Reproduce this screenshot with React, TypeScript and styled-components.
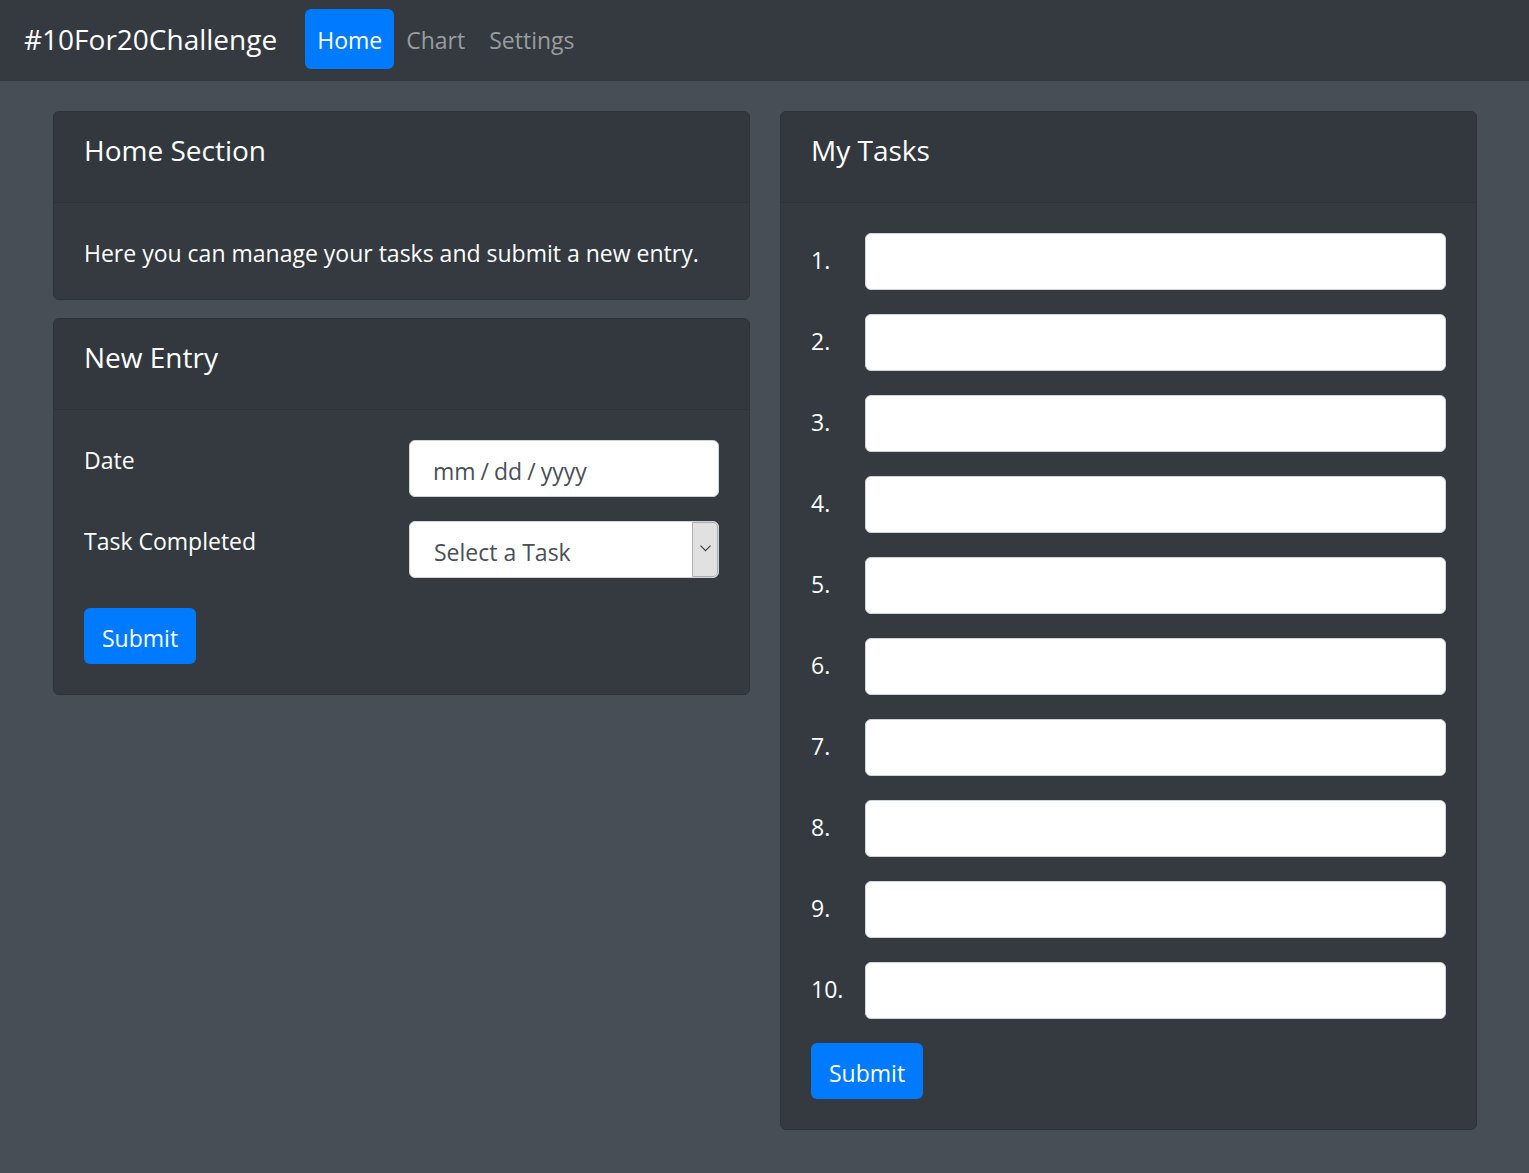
import React from 'react';
import styled, { createGlobalStyle } from 'styled-components';

const GlobalStyle = createGlobalStyle`
  *, *::before, *::after { box-sizing: border-box; }
  html { min-height: 100%; background: #484e55; }
  body {
    margin: 0;
    background: #484e55;
    color: #fff;
    font-family: "Open Sans", "Noto Sans", sans-serif;
    font-size: 23px;
    line-height: 36px;
  }
  button, input, select { font: inherit; }
`;

const Navbar = styled.nav`
  display: flex;
  align-items: center;
  gap: 28px;
  height: 81px;
  padding: 0 24px 3px;
  background: #343a40;
`;

const Brand = styled.a`
  color: #fff;
  font-size: 28px;
  line-height: 44px;
  text-decoration: none;
`;

const NavList = styled.ul`
  display: flex;
  margin: 0;
  padding: 0;
  list-style: none;
`;

const NavLink = styled.a<{ $active?: boolean }>`
  display: block;
  padding: 13px 12px 11px;
  border-radius: 6px;
  color: ${p => (p.$active ? '#fff' : '#999c9f')};
  background: ${p => (p.$active ? '#007bff' : 'transparent')};
  text-decoration: none;
`;

const Main = styled.main`
  display: grid;
  grid-template-columns: repeat(2, minmax(0, 1fr));
  align-items: start;
  gap: 30px;
  padding: 30px 52px 43px 53px;
`;

const Column = styled.div`
  display: flex;
  flex-direction: column;
  gap: 18px;
`;

const Card = styled.section`
  border: 1px solid #2e3338;
  border-radius: 6px;
  background: #343a40;
`;

const CardHeader = styled.header`
  height: 91px;
  padding: 20px 30px 0;
  border-bottom: 1px solid #2e3338;
  background: #32383e;
  border-radius: 5px 5px 0 0;
`;

const CardTitle = styled.h2`
  margin: 0;
  font-size: 28px;
  font-weight: 400;
  line-height: 36px;
`;

const CardBody = styled.div`
  padding: 30px;
`;

const Text = styled.p`
  margin: 0;
  padding-top: 4px;
  line-height: 32px;
`;

const Form = styled.form`
  display: flex;
  flex-direction: column;
  align-items: stretch;
  gap: 24px;
`;

const EntryRow = styled.div`
  display: grid;
  grid-template-columns: minmax(0, 1fr) minmax(0, 1fr);
  gap: 15px;
`;

const TaskRow = styled.div`
  display: grid;
  grid-template-columns: 39px minmax(0, 1fr);
  gap: 15px;
`;

const Label = styled.label`
  padding-top: 2px;

  ${TaskRow} & {
    padding-top: 9px;
  }
`;

const Field = styled.input`
  display: block;
  width: 100%;
  height: 57px;
  padding: 4px 22px 0;
  border: 1px solid #ced4da;
  border-radius: 6px;
  background: #fff;
  color: #495057;
`;

const DateField = styled(Field)`
  &::-webkit-calendar-picker-indicator { display: none; }
  &::-webkit-datetime-edit-text { padding: 0 4px; }
  &::-webkit-datetime-edit-month-field,
  &::-webkit-datetime-edit-day-field,
  &::-webkit-datetime-edit-year-field {
    padding: 0 1px;
    color: #495057;
  }
`;

const SelectBox = styled.div`
  display: grid;
  grid-template-columns: minmax(0, 1fr) 27px;
  height: 57px;
`;

const Select = styled.select`
  grid-area: 1 / 1 / 2 / 3;
  width: 100%;
  height: 57px;
  padding: 4px 40px 0 24px;
  border: 1px solid #ced4da;
  border-radius: 6px;
  appearance: none;
  background: #fff;
  color: #495057;
`;

const Arrow = styled.span`
  grid-area: 1 / 2 / 2 / 3;
  display: grid;
  place-items: center;
  margin: 1px 1px 1px 0;
  padding-bottom: 2px;
  border: 1px solid #adadad;
  border-radius: 0 5px 5px 0;
  background: #e1e1e1;
  pointer-events: none;
  z-index: 1;
`;

const SubmitButton = styled.button<{ $spaced?: boolean }>`
  align-self: flex-start;
  height: 56px;
  margin-top: ${p => (p.$spaced ? '6px' : '0')};
  padding: 4px 18px 0;
  border: 0;
  border-radius: 6px;
  background: #007bff;
  color: #fff;
`;

const tasks = Array.from({ length: 10 }, (_, i) => i + 1);

export default function App() {
  return (
    <>
      <GlobalStyle />
      <Navbar>
        <Brand href="#">#10For20Challenge</Brand>
        <NavList>
          <li><NavLink href="#home" $active>Home</NavLink></li>
          <li><NavLink href="#chart">Chart</NavLink></li>
          <li><NavLink href="#settings">Settings</NavLink></li>
        </NavList>
      </Navbar>
      <Main>
        <Column>
          <Card>
            <CardHeader><CardTitle>Home Section</CardTitle></CardHeader>
            <CardBody><Text>Here you can manage your tasks and submit a new entry.</Text></CardBody>
          </Card>
          <Card>
            <CardHeader><CardTitle>New Entry</CardTitle></CardHeader>
            <CardBody>
              <Form onSubmit={e => e.preventDefault()}>
                <EntryRow>
                  <Label htmlFor="date">Date</Label>
                  <DateField id="date" type="date" />
                </EntryRow>
                <EntryRow>
                  <Label htmlFor="task">Task Completed</Label>
                  <SelectBox>
                    <Select id="task"><option>Select a Task</option></Select>
                    <Arrow>
                      <svg width="11" height="7" viewBox="0 0 11 7" fill="none" stroke="#404040" strokeWidth="1.2" aria-hidden="true">
                        <path d="M0.5 0.7 L5.5 5.7 L10.5 0.7" />
                      </svg>
                    </Arrow>
                  </SelectBox>
                </EntryRow>
                <SubmitButton type="submit" $spaced>Submit</SubmitButton>
              </Form>
            </CardBody>
          </Card>
        </Column>
        <Card>
          <CardHeader><CardTitle>My Tasks</CardTitle></CardHeader>
          <CardBody>
            <Form onSubmit={e => e.preventDefault()}>
              {tasks.map(n => (
                <TaskRow key={n}>
                  <Label htmlFor={`task-${n}`}>{n}.</Label>
                  <Field id={`task-${n}`} type="text" />
                </TaskRow>
              ))}
              <SubmitButton type="submit">Submit</SubmitButton>
            </Form>
          </CardBody>
        </Card>
      </Main>
    </>
  );
}
